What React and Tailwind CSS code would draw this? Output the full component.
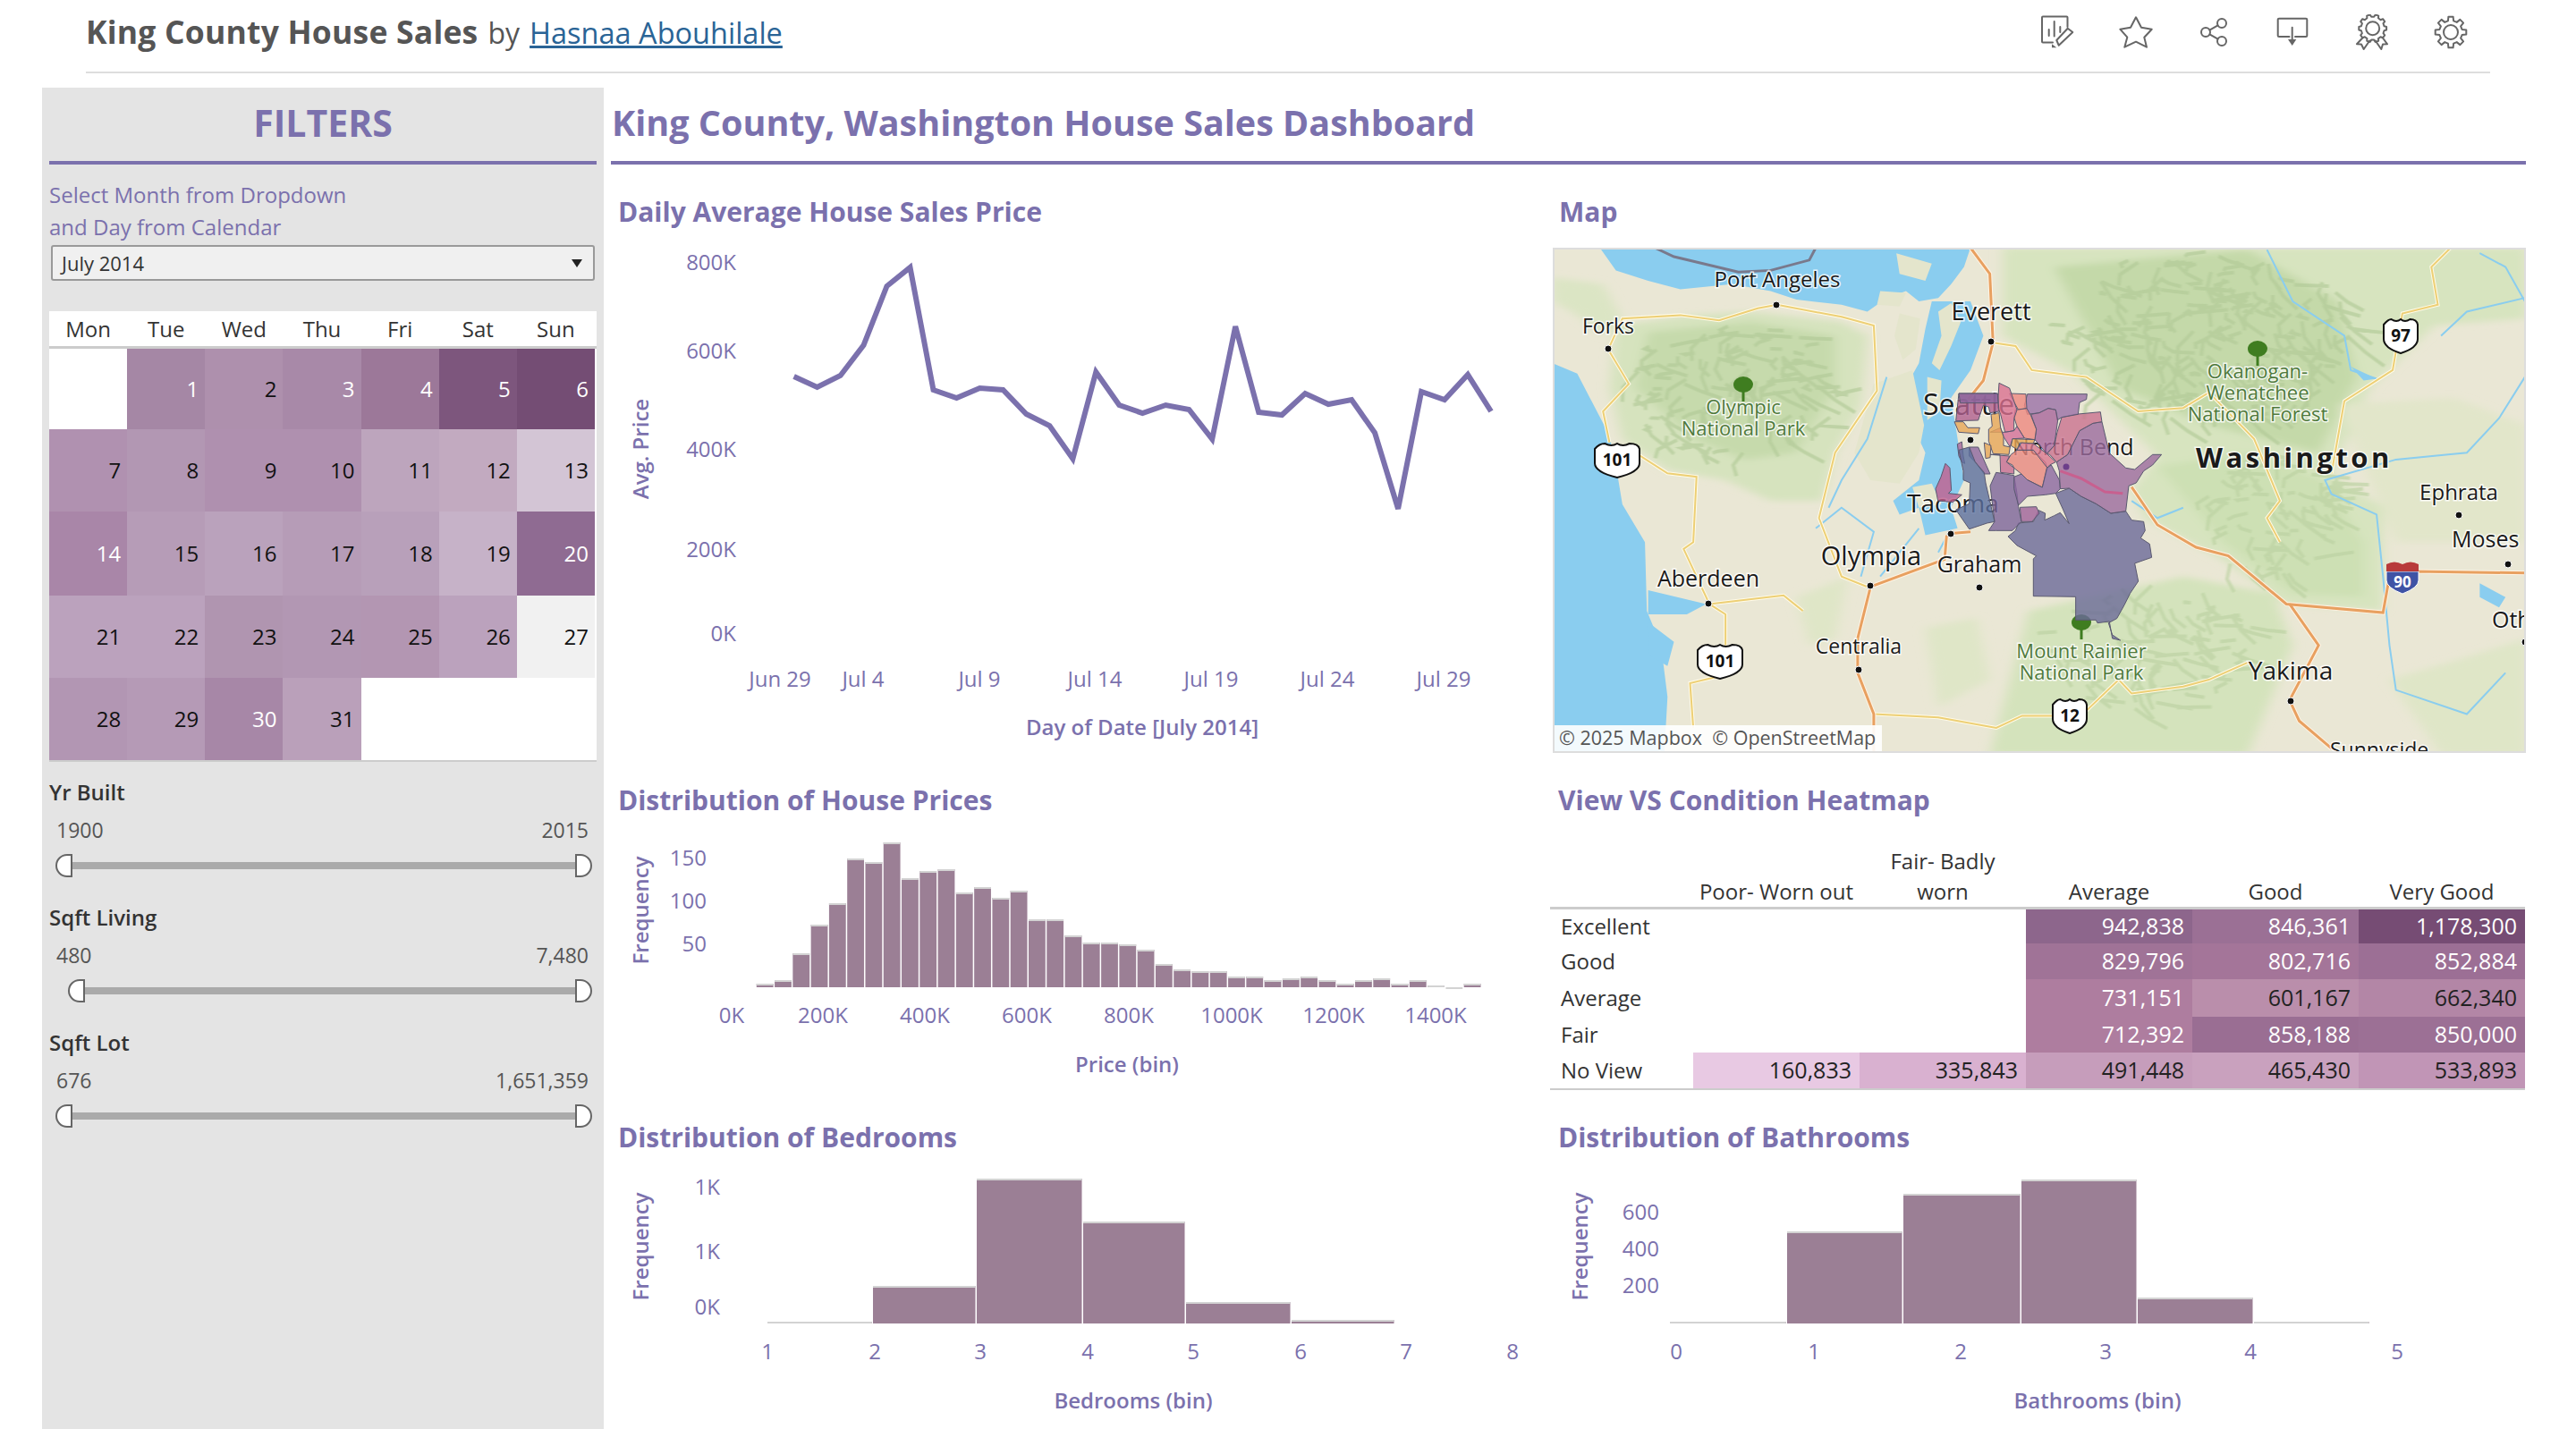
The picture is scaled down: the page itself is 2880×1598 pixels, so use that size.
import React from 'react'

const linePts = [421, 433, 420, 386, 320, 299, 436, 445, 434, 436, 463, 476, 513, 416, 453, 462, 453, 458, 491, 365, 461, 464, 440, 452, 447, 484, 569, 438, 447, 419, 460]
const priceBars = [4, 8, 38, 70, 94, 144, 140, 162, 122, 130, 132, 106, 112, 100, 108, 76, 76, 58, 50, 50, 48, 42, 26, 20, 18, 18, 12, 12, 8, 10, 12, 8, 4, 8, 10, 4, 8, 2, 0, 4]

const calendar = [
  [['', '#ffffff'], ['1', '#a587a5', 1], ['2', '#ae90ad'], ['3', '#a889a8', 1], ['4', '#9c7899', 1], ['5', '#7d567d', 1], ['6', '#744d74', 1]],
  [['7', '#b091b0'], ['8', '#b297b3'], ['9', '#af90af'], ['10', '#af90af'], ['11', '#bda5bd'], ['12', '#c2aac0'], ['13', '#d3c5d5']],
  [['14', '#a986a8', 1], ['15', '#b69cb7'], ['16', '#baa2bc'], ['17', '#b69cb7'], ['18', '#b8a0ba'], ['19', '#c6b2c8'], ['20', '#8f6b92', 1]],
  [['21', '#bba2bd'], ['22', '#bba2bd'], ['23', '#b095b0'], ['24', '#b297b3'], ['25', '#b396b2'], ['26', '#bba2bd'], ['27', '#f1f1f1']],
  [['28', '#b296b3'], ['29', '#b59ab6'], ['30', '#a787a7', 1], ['31', '#baa0ba'], ['', '#ffffff'], ['', '#ffffff'], ['', '#ffffff']],
]
const rowHeights = ['h-[90px]', 'h-[92px]', 'h-[94px]', 'h-[92px]', 'h-[92px]']

const heatRows = [
  ['Excellent', 'h-[38px]', [null, null, ['942,838', '#8d668c', 1], ['846,361', '#9b7095', 1], ['1,178,300', '#764c74', 1]]],
  ['Good', 'h-[40px]', [null, null, ['829,796', '#a07397', 1], ['802,716', '#a47599', 1], ['852,884', '#9c6f95', 1]]],
  ['Average', 'h-[42px]', [null, null, ['731,151', '#ae7d9f', 1], ['601,167', '#ba8eab'], ['662,340', '#b386a6']]],
  ['Fair', 'h-[40px]', [null, null, ['712,392', '#ae7d9f', 1], ['858,188', '#9a6e93', 1], ['850,000', '#9c7095', 1]]],
  ['No View', 'h-[40px]', [['160,833', '#e8c9e3'], ['335,843', '#d9b1d0'], ['491,448', '#c69dbb'], ['465,430', '#c9a1be'], ['533,893', '#c195b6']]],
]

const sliders = [
  { label: 'Yr Built', min: '1900', max: '2015', inset: 'ml-[7px]' },
  { label: 'Sqft Living', min: '480', max: '7,480', inset: 'ml-[21px]' },
  { label: 'Sqft Lot', min: '676', max: '1,651,359', inset: 'ml-[7px]' },
]

function gearPath(cx, cy, ro, ri, n) {
  let d = ''
  for (let i = 0; i < n; i++) {
    const a = (i * 2 * Math.PI) / n
    const w = Math.PI / n
    const pts = [[ri, a - w * 0.62], [ro, a - w * 0.38], [ro, a + w * 0.38], [ri, a + w * 0.62]]
    pts.forEach(([r, t], j) => {
      d += `${i === 0 && j === 0 ? 'M' : 'L'}${(cx + r * Math.cos(t)).toFixed(1)} ${(cy + r * Math.sin(t)).toFixed(1)} `
    })
  }
  return d + 'Z'
}

function HeaderIcons() {
  const stroke = { fill: 'none', stroke: '#666', strokeWidth: 2, strokeLinejoin: 'round', strokeLinecap: 'round' }
  const size = 'w-[40px] h-[40px]'
  return (
    <div className="flex gap-[48px] mr-[24px]">
      <svg viewBox="0 0 40 40" className={size}>
        <path d="M15 31.5H4a1 1 0 0 1-1-1V3.5a1 1 0 0 1 1-1h26.500a1 1 0 0 1 1 1V14" {...stroke} />
        <path d="M10.700 17v7M16.700 8v16.500M23.300 14v6" {...stroke} />
        <path d="M19.300 29 31.700 15.700l5.600 4.300-15.600 14.700z" {...stroke} />
        <path d="M14 33.300l5.300 4H14z" fill="#666" />
      </svg>
      <svg viewBox="0 0 40 40" className={size}>
        <path d="M20 3.300 26 14.700l11.700 2-8.400 9 2.700 11L20 30.700 7.300 36.700l3-11-8-9 11.700-2z" {...stroke} />
      </svg>
      <svg viewBox="0 0 40 40" className={size}>
        <circle cx="28" cy="10" r="5" {...stroke} />
        <circle cx="10" cy="20" r="5" {...stroke} />
        <circle cx="28" cy="30" r="5" {...stroke} />
        <path d="M14.400 17.600 23.600 12.400M14.400 22.400 23.600 27.600" {...stroke} />
      </svg>
      <svg viewBox="0 0 40 40" className={size}>
        <path d="M15.500 25H4a1.300 1.300 0 0 1-1.300-1.300V6a1.300 1.300 0 0 1 1.300-1.300h30A1.300 1.300 0 0 1 35.300 6v17.700a1.300 1.300 0 0 1-1.300 1.300H22" {...stroke} />
        <path d="M18.700 14.700V29" {...stroke} />
        <path d="M14 28h9.300l-4.600 7z" fill="#666" />
      </svg>
      <svg viewBox="0 0 40 40" className={size}>
        <path d={gearPath(20.700, 15.700, 15.500, 13, 10)} {...stroke} />
        <circle cx="20.700" cy="15.700" r="7.500" {...stroke} />
        <path d="M9.700 26 3 33.300l5 .2 2.700 5.500 6.600-9.500M31.700 26l5.300 7.300-5 .2-1.700 5.500-6.600-9.500" {...stroke} />
      </svg>
      <svg viewBox="0 0 40 40" className={size}>
        <path d={gearPath(20, 20, 17.500, 13, 8)} {...stroke} />
        <circle cx="20" cy="20" r="8" {...stroke} />
      </svg>
    </div>
  )
}

function SliderFilter({ label, min, max, inset }) {
  return (
    <div>
      <div className="h-[36px] leading-[36px] text-[24px] font-semibold text-[#333]">{label}</div>
      <div className="mt-[8px] h-[32px] leading-[32px] flex justify-between pl-[8px] pr-[9px] text-[23px] text-[#555]">
        <span>{min}</span>
        <span>{max}</span>
      </div>
      <div className={`mt-[11px] mr-[5px] h-[26px] flex items-center ${inset}`}>
        <div className="w-[19px] h-[26px] rounded-l-full border-2 border-[#666] bg-white" />
        <div className="flex-1 h-[8px] bg-[#aaaaaa]" />
        <div className="w-[19px] h-[26px] rounded-r-full border-2 border-[#666] bg-white" />
      </div>
    </div>
  )
}

function Sidebar() {
  return (
    <aside className="w-[628px] h-[1500px] ml-[47px] px-[8px] bg-[#e4e4e4]">
      <div className="h-[82px] pb-[3px] flex items-center justify-center text-[41px] font-bold text-[#7b71ad]">FILTERS</div>
      <div className="h-[4px] bg-[#7b71ad]" />
      <p className="mt-[16px] text-[24px] leading-[36px] font-medium text-[#7b71ad]">
        Select Month from Dropdown<br />and Day from Calendar
      </p>
      <div className="mt-[2px] mx-[2px] h-[40px] flex items-center justify-between px-[10px] border-2 border-[#999] rounded-[3px] bg-[#f0f0f0] text-[22px] text-[#333]">
        <span>July 2014</span>
        <span className="w-0 h-0 border-x-[6px] border-x-transparent border-t-[9px] border-t-[#222] mr-[2px]" />
      </div>
      <div className="mt-[34px] bg-white border-b-2 border-[#ccc]">
        <div className="grid grid-cols-7 pr-[2px] h-[42px] border-b-[3px] border-[#ccc] text-[24px] text-[#333] text-center leading-[40px]">
          {['Mon', 'Tue', 'Wed', 'Thu', 'Fri', 'Sat', 'Sun'].map((d) => <div key={d}>{d}</div>)}
        </div>
        {calendar.map((row, r) => (
          <div key={r} className={`grid grid-cols-7 pr-[2px] ${rowHeights[r]}`}>
            {row.map(([day, color, light], c) => (
              <div
                key={c}
                style={{ backgroundColor: color }}
                className={`flex items-center justify-end pr-[7px] text-[24px] ${light ? 'text-white' : 'text-[#111]'}`}
              >
                {day}
              </div>
            ))}
          </div>
        ))}
      </div>
      <div className="mt-[16px] flex flex-col gap-[27px]">
        {sliders.map((s) => <SliderFilter key={s.label} {...s} />)}
      </div>
    </aside>
  )
}

function AxisText({ x, y, children, anchor = 'middle', strong, rotate }) {
  return (
    <text
      x={x}
      y={rotate ? y : y - 1.500}
      textAnchor={anchor}
      dominantBaseline="central"
      transform={rotate ? `rotate(-90 ${x} ${y})` : undefined}
      className={`${strong ? 'font-semibold text-[24px]' : 'text-[24px]'} fill-[#7b71ad]`}
    >
      {children}
    </text>
  )
}

function Bar({ x, w, h, base }) {
  return (
    <g>
      <rect x={x} y={base - h} width={w - 1.500} height={h} fill="#9b7f95" />
      <rect x={x} y={base - h} width={w - 1.500} height={2} fill="#d3d3d3" />
    </g>
  )
}

function LineChart() {
  const d = linePts.map((y, i) => `${i ? 'L' : 'M'}${(887.6 + 25.98 * i).toFixed(1)} ${y}`).join(' ')
  return (
    <svg viewBox="683 255 1050 605" className="w-full flex-1">
      {[['800K', 294], ['600K', 393], ['400K', 503], ['200K', 615], ['0K', 709]].map(([t, y]) => <AxisText key={t} x={823} y={y} anchor="end">{t}</AxisText>)}
      {[['Jun 29', 872], ['Jul 4', 965], ['Jul 9', 1095], ['Jul 14', 1224], ['Jul 19', 1354], ['Jul 24', 1484], ['Jul 29', 1614]].map(([t, x]) => <AxisText key={t} x={x} y={760}>{t}</AxisText>)}
      <AxisText x={1277} y={814} strong>Day of Date [July 2014]</AxisText>
      <AxisText x={715} y={502} strong rotate>Avg. Price</AxisText>
      <path d={d} fill="none" stroke="#7b71ad" strokeWidth="6" strokeLinejoin="miter" />
    </svg>
  )
}

function PriceHistogram() {
  return (
    <svg viewBox="683 913 1050 317" className="w-full flex-1">
      {[['150', 960], ['100', 1008], ['50', 1056]].map(([t, y]) => <AxisText key={t} x={790} y={y} anchor="end">{t}</AxisText>)}
      {[['0K', 818], ['200K', 920], ['400K', 1034], ['600K', 1148], ['800K', 1262], ['1000K', 1377], ['1200K', 1491], ['1400K', 1605]].map(([t, x]) => <AxisText key={t} x={x} y={1136}>{t}</AxisText>)}
      <AxisText x={1260} y={1191} strong>Price (bin)</AxisText>
      <AxisText x={715} y={1018} strong rotate>Frequency</AxisText>
      {priceBars.map((h, i) => <Bar key={i} x={845.8 + 20.28 * i} w={20.28} h={h} base={1104} />)}
    </svg>
  )
}

function BedroomChart() {
  const bars = [[858, 976, 2], [976, 1092, 42], [1092, 1211, 162], [1211, 1326, 114], [1326, 1444, 24], [1444, 1560, 4]]
  return (
    <svg viewBox="683 1290 1050 308" className="w-full flex-1">
      {[['1K', 1328], ['1K', 1400], ['0K', 1462]].map(([t, y]) => <AxisText key={y} x={805} y={y} anchor="end">{t}</AxisText>)}
      {[858, 978, 1096, 1216, 1334, 1454, 1572, 1691].map((x, i) => <AxisText key={x} x={x} y={1512}>{i + 1}</AxisText>)}
      <AxisText x={1267} y={1567} strong>Bedrooms (bin)</AxisText>
      <AxisText x={715} y={1394} strong rotate>Frequency</AxisText>
      {bars.map(([a, b, h]) => <Bar key={a} x={a} w={b - a} h={h} base={1480} />)}
    </svg>
  )
}

function BathroomChart() {
  const bars = [[1867, 1998, 2], [1998, 2128, 103], [2128, 2260, 145], [2260, 2390, 161], [2390, 2520, 29], [2520, 2650, 2]]
  return (
    <svg viewBox="1733 1290 1091 308" className="w-full flex-1">
      {[['600', 1356], ['400', 1397], ['200', 1438]].map(([t, y]) => <AxisText key={t} x={1855} y={y} anchor="end">{t}</AxisText>)}
      {[1874, 2028, 2192, 2354, 2516, 2680].map((x, i) => <AxisText key={x} x={x} y={1512}>{i}</AxisText>)}
      <AxisText x={2345} y={1567} strong>Bathrooms (bin)</AxisText>
      <AxisText x={1765} y={1394} strong rotate>Frequency</AxisText>
      {bars.map(([a, b, h]) => <Bar key={a} x={a} w={b - a} h={h} base={1480} />)}
    </svg>
  )
}

function Heatmap() {
  return (
    <div className="mt-[32px] mr-[1px] text-[24px] text-[#333]">
      <div className="grid grid-cols-[160px_repeat(5,186px)] h-[72px] items-end text-center leading-[34px] border-b-[3px] border-[#ccc]">
        <div />
        <div>Poor- Worn out</div>
        <div>Fair- Badly<br />worn</div>
        <div>Average</div>
        <div>Good</div>
        <div>Very Good</div>
      </div>
      {heatRows.map(([label, h, cells]) => (
        <div key={label} className={`grid grid-cols-[160px_repeat(5,186px)] items-stretch ${h}`}>
          <div className="pl-[12px] flex items-center">{label}</div>
          {cells.map((c, i) =>
            c ? (
              <div
                key={i}
                style={{ backgroundColor: c[1] }}
                className={`flex items-center justify-end pr-[9px] text-[25px] ${c[2] ? 'text-white' : 'text-[#222]'}`}
              >
                {c[0]}
              </div>
            ) : (
              <div key={i} />
            ),
          )}
        </div>
      ))}
      <div className="h-[2px] bg-[#ccc]" />
    </div>
  )
}

// deterministic strokes for the relief on the basemap
function hachures(cx, cy, rx, ry, count, seed) {
  let s = seed
  const rnd = () => {
    s = (s * 16807) % 2147483647
    return s / 2147483647
  }
  let d = ''
  for (let i = 0; i < count; i++) {
    const a = rnd() * Math.PI * 2
    const r = Math.sqrt(rnd())
    const x = cx + Math.cos(a) * r * rx
    const y = cy + Math.sin(a) * r * ry
    const dx = (rnd() - 0.5) * 60
    const dy = (rnd() - 0.2) * 60
    d += `M${x.toFixed(0)} ${y.toFixed(0)}L${(x + dx).toFixed(0)} ${(y + dy).toFixed(0)}L${(x + dx * 1.6 + 14).toFixed(0)} ${(y + dy * 1.9).toFixed(0)}`
  }
  return d
}

const roadsMajor = [
  '670,44 700,120 705,320 690,430 660,500',
  '640,875 670,870',
  '633,880 630,950 515,1030 495,1180 495,1280 520,1400 520,1518',
  '920,740 960,850 1020,915 1070,940 1160,1080 1310,1105 1320,1000 1360,985 1532,990',
  '1165,1080 1210,1200 1165,1360 1180,1420 1230,1500',
]
const roadsMinor = [
  '108,340 140,440 100,520 110,610',
  '108,340 130,250 220,240 280,255 340,220 370,210 470,245 520,270 525,460 460,640 435,830 470,1000 510,1030',
  '150,640 200,700 245,710 240,900 225,920 245,1000 265,1080 290,1110 290,1200',
  '265,1080 380,1055 410,1100',
  '280,1290 235,1310 240,1440',
  '705,320 740,330 765,400 850,420 930,520 1000,510 1040,465 1110,600 1150,780 1130,830 1150,900',
  '1415,44 1385,100 1395,210 1340,235 1325,400 1250,490 1230,700',
  '520,1400 620,1410 710,1440 750,1405 800,1405 850,1390 900,1300 920,1340 1000,1320 1040,1300 1100,1250',
]
const rivers = [
  '1130,50 1170,200 1250,300 1260,400 1300,425',
  '1530,420 1490,540 1440,640 1330,660 1220,720 1230,760 1300,820 1310,1000 1320,1200 1330,1330 1440,1400 1500,1280',
  '920,780 960,830 1000,800',
  '1460,60 1500,100 1530,200',
  '1400,300 1440,230 1530,190',
  '540,420 510,600 470,720 450,800',
  '430,860 470,800 520,870 500,1000',
  '590,860 560,930 530,1000',
  '640,860 620,930',
]
const islands = [
  'M640 205 655 260 640 330 622 400 610 380 625 300 620 230Z',
  'M560 235 592 250 585 340 565 370 552 300Z',
  'M530 170 570 175 560 215 525 210Z',
  'M520 440 580 400 598 560 590 640 560 730 515 720 490 640Z',
  'M580 740 610 730 625 790 590 800Z',
  'M555 60 610 90 600 140 560 120Z',
  'M603 420 625 430 622 520 603 545Z',
]

const counties = [
  ['#6b6a98', '315,540 340,520 350,495 400,490 418,452 440,462 438,485 470,470 490,460 520,497 500,450 475,395 520,378 560,405 610,430 660,462 710,455 730,485 770,490 775,520 760,545 790,565 797,610 740,630 752,690 725,730 705,770 680,815 652,830 665,870 692,888 665,882 655,825 615,830 610,820 542,820 542,742 400,740 400,615 410,605 345,570'],
  ['#9b6b9e', '555,185 600,160 630,155 655,260 710,310 740,315 800,265 830,265 800,300 770,320 745,360 720,370 710,455 660,462 610,430 560,405 520,378 490,380 487,320 478,290 515,265'],
  ['#c9728f', '495,140 540,130 625,122 630,155 600,160 555,185 515,265 478,290 455,265 445,262 470,235 480,190'],
  ['#9a70a6', '380,62 580,62 578,80 555,90 550,130 495,140 480,150 475,115 450,110 420,125 380,130 370,100'],
  ['#a8669b', '392,130 420,125 450,110 475,115 482,150 470,235 445,262 405,215 410,180'],
  ['#ee8880', '320,60 375,62 378,110 350,115 330,80'],
  ['#ee8880', '340,115 378,110 392,135 410,180 405,215 370,210 345,170 335,140'],
  ['#d97090', '285,25 320,42 345,115 335,145 335,185 305,190 290,130 280,105'],
  ['#d4709a', '255,190 305,190 335,185 345,170 370,210 330,212 322,240 300,205 290,175'],
  ['#b0608f', '150,60 280,60 285,120 255,125 250,105 232,100 215,150 140,152'],
  ['#8a669e', '150,60 280,60 282,92 155,92'],
  ['#e7a858', '258,130 285,125 290,175 300,205 300,235 322,240 318,265 265,262 250,220 250,180 262,170'],
  ['#e7a858', '135,155 165,155 180,175 220,175 215,195 150,190'],
  ['#e7a858', '330,212 405,215 400,228 380,230 355,225 345,248 325,235'],
  ['#e7a858', '235,225 258,235 255,275 240,278'],
  ['#e9887f', '325,265 345,250 400,250 440,290 447,310 430,375 380,350 360,330 335,310 330,300 310,290'],
  ['#d9788f', '345,250 360,225 400,228 445,262 475,290 455,300 447,310 400,250'],
  ['#c25f8d', '105,295 120,310 125,385 115,395 160,400 130,425 80,420 72,380 90,340'],
  ['#a8669b', '145,230 160,222 165,270 170,295 160,290 150,270'],
  ['#8f689f', '185,240 215,240 255,330 235,330 205,290 185,270'],
  ['#5b6f9e', '150,250 185,240 205,290 235,325 240,360 270,490 245,495 185,515 140,450 185,430 188,360 165,350 165,320'],
  ['#7d659a', '275,325 335,335 345,395 350,440 360,490 330,520 275,520 250,520 270,490 255,370'],
  ['#8b68a0', '445,310 460,300 487,350 490,380 475,395 440,400 380,405 375,410 350,435 335,380 335,340 360,330 380,350 430,375'],
  ['#a0639a', '355,442 410,440 420,462 395,490 360,490'],
  ['#c76d92', '255,265 320,270 310,290 335,310 335,330 290,325 288,265'],
]

const mapLabels = [
  ['Port Angeles', 251, 34, 24],
  ['Everett', 490, 70, 27],
  ['Forks', 62, 87, 23],
  ['Yakima', 825, 472, 28],
  ['Ephrata', 1013, 272, 24],
  ['Centralia', 342, 445, 23],
  ['Aberdeen', 174, 369, 25],
  ['Olympia', 356, 343, 29],
  ['Graham', 477, 353, 25],
]
const parkLabels = [
  ['Olympic', 213, 177], ['National Park', 213, 201],
  ['Okanogan-', 788, 137], ['Wenatchee', 788, 161], ['National Forest', 788, 185],
  ['Mount Rainier', 591, 450], ['National Park', 591, 474],
]
const dots = [[250, 64], [62, 113], [490, 105], [467, 215], [445, 320], [355, 378], [477, 380], [174, 398], [342, 472], [825, 507], [1013, 299], [1068, 354], [1087, 441]]
const trees = [[213, 156], [788, 116], [591, 422]]
const shields = [[72, 237, 50, '101'], [948, 98, 38, '97'], [187, 462, 50, '101'], [578, 523, 38, '12']]

function MapLabel({ x, y, size, children, anchor = 'middle', color = '#1a1a1a', weight = 400, spacing }) {
  return (
    <text
      x={x}
      y={y}
      textAnchor={anchor}
      dominantBaseline="central"
      fontSize={size}
      fontWeight={weight}
      fill={color}
      letterSpacing={spacing}
      stroke="#ffffff"
      strokeOpacity="0.8"
      strokeWidth="3"
      paintOrder="stroke"
    >
      {children}
    </text>
  )
}

function Shield({ x, y, w, label }) {
  const hw = w / 2
  return (
    <g>
      <path
        d={`M${x - hw} ${y - 12}q5 -6 ${hw * 0.45} -6q${hw * 0.3} 4 ${hw * 0.55} 0q${hw * 0.25} 4 ${hw * 0.55} 0q${hw * 0.4} 0 ${hw * 0.45} 6v16q0 10 -${hw} 16q-${hw} -6 -${hw} -16z`}
        fill="#fff"
        stroke="#111"
        strokeWidth="2"
      />
      <text x={x} y={y} textAnchor="middle" dominantBaseline="central" fontSize="19" fontWeight="700" fill="#111">{label}</text>
    </g>
  )
}

function MapPanel() {
  const ns = { vectorEffect: 'non-scaling-stroke' }
  return (
    <div className="relative ml-[3px] mt-[22px] h-[565px] overflow-hidden">
      <svg viewBox="0 0 1088 565" className="w-full h-full block">
        <defs>
          <filter id="soft" x="-5%" y="-5%" width="110%" height="110%"><feGaussianBlur stdDeviation="9" /></filter>
          <filter id="relief" x="-5%" y="-5%" width="110%" height="110%"><feGaussianBlur stdDeviation="1.500" /></filter>
        </defs>
        <rect width="1088" height="565" fill="#eae7d5" />
        {/* basemap, points taken in a 1.39 x 2.6 scaled space */}
        <g transform="scale(.7207 .3846) translate(-22 -44)">
          <g filter="url(#soft)">
            <path d="M120 270 240 240 330 230 470 260 510 300 500 500 460 640 440 780 360 780 290 720 200 690 130 600 110 450Z" fill="#d6e3be" />
            <path d="M170 290 330 260 460 300 460 450 400 640 320 660 240 600 150 450Z" fill="#c6daac" />
            <path d="M720 44H1532V250L1390 270 1290 450 1230 700 1310 800 1310 1100 1160 1080 1060 950 940 830 920 750 960 650 830 410 720 300Z" fill="#d7e4bf" />
            <path d="M800 100 1100 50 1240 200 1270 420 1210 640 1040 560 900 450Z" fill="#c4d9a9" />
            <path d="M960 680 1100 640 1220 720 1280 900 1280 1060 1170 1050 1060 900Z" fill="#cde0b4" />
            <path d="M760 1100 1000 1000 1140 1050 1170 1200 1100 1518H700Z" fill="#d4e3bc" />
            <path d="M1320 1300 1430 1240 1532 1180V1518H1400Z" fill="#dfe6c7" />
            <path d="M20 130 100 150 130 250 100 300 60 240 22 200Z" fill="#dbe5c4" />
            <path d="M400 1060 480 1000 460 1180 420 1200ZM600 1150 680 1120 700 1300 620 1380Z" fill="#dfe6c7" />
            <path d="M1240 500 1420 480 1532 560 1532 900 1330 900Z" fill="#e2e6ca" />
          </g>
          <g filter="url(#relief)" fill="none" strokeWidth="4" opacity=".65">
            <path d={hachures(310, 460, 170, 190, 110, 11)} stroke="#b2ca98" {...ns} />
            <path d={hachures(1040, 300, 230, 250, 210, 37)} stroke="#b2ca98" {...ns} />
            <path d={hachures(1150, 820, 120, 190, 70, 71)} stroke="#bcd2a2" {...ns} />
            <path d={hachures(950, 1210, 170, 190, 80, 97)} stroke="#bcd2a2" {...ns} />
          </g>

          <path d="M22 380 60 410 110 590 122 700 130 790 165 900 168 1100 190 1200 200 1350 195 1518H22Z" fill="#8acdef" />
          <path d="M95 44H670L660 100 640 150 620 190 590 200 570 170 540 190 510 230 470 210 400 195 360 170 300 150 220 165 170 140 120 110Z" fill="#8acdef" />
          <path d="M610 200 670 200 690 300 670 400 640 480 650 600 660 720 640 800 650 860 600 880 590 800 560 820 550 780 590 720 600 640 580 560 560 480 590 380 600 280Z" fill="#8acdef" />
          <path d="M170 1040 260 1080 230 1110 170 1110ZM168 1130 210 1190 200 1260 172 1230Z" fill="#8acdef" />
          <path d={islands.join(' ')} fill="#e4e5cc" />
          {rivers.map((p) => <polyline key={p} points={p} fill="none" stroke="#8acdef" strokeWidth="2" {...ns} />)}
          <path d="M1260 390 1300 425 1280 430ZM1460 1020 1500 1060 1490 1090 1460 1060Z" fill="#8acdef" />
          <polyline points="180,44 210,70 310,115 360,110 420,80 430,44" fill="none" stroke="#79798c" strokeWidth="3" {...ns} />
          {roadsMinor.map((p) => <polyline key={p} points={p} fill="none" stroke="#fffbe8" strokeWidth="4" {...ns} />)}
          {roadsMinor.map((p) => <polyline key={p} points={p} fill="none" stroke="#edcf75" strokeWidth="2" {...ns} />)}
          {roadsMajor.map((p) => <polyline key={p} points={p} fill="none" stroke="#fff4e4" strokeWidth="5" {...ns} />)}
          {roadsMajor.map((p) => <polyline key={p} points={p} fill="none" stroke="#e8a060" strokeWidth="3" {...ns} />)}
        </g>

        {mapLabels.map(([t, x, y, s]) => <MapLabel key={t} x={x} y={y} size={s}>{t}</MapLabel>)}
        {parkLabels.map(([t, x, y], i) => <MapLabel key={i} x={x} y={y} size={22} color="#4f7a3c">{t}</MapLabel>)}
        <MapLabel x={414} y={174} size={32} anchor="start">Seattle</MapLabel>
        <MapLabel x={396} y={285} size={28} anchor="start">Tacoma</MapLabel>
        <MapLabel x={514} y={222} size={25} anchor="start">North Bend</MapLabel>
        <MapLabel x={1005} y={325} size={25} anchor="start">Moses Lake</MapLabel>
        <MapLabel x={1050} y={415} size={25} anchor="start">Othello</MapLabel>
        <MapLabel x={869} y={561} size={23} anchor="start">Sunnyside</MapLabel>
        <MapLabel x={829} y={234} size={31} weight={700} spacing={3.500}>Washington</MapLabel>
        {dots.map(([x, y]) => <circle key={x} cx={x} cy={y} r="4" fill="#111" stroke="#fff" strokeWidth="1" />)}
        {trees.map(([x, y]) => (
          <g key={x} fill="#3f7d20">
            <rect x={x - 1.500} y={y} width="3" height="16" />
            <ellipse cx={x} cy={y - 3} rx="11" ry="9" />
          </g>
        ))}
        {shields.map(([x, y, w, t]) => <Shield key={x} x={x} y={y} w={w} label={t} />)}
        <g>
          <path d="M932 362h36v10q0 8 -18 15q-18 -7 -18 -15z" fill="#3f53a5" stroke="#fff" strokeWidth="1" />
          <path d="M932 354q9 -5 18 0q9 -5 18 0v8h-36z" fill="#b83a3a" />
          <text x="950" y="373" textAnchor="middle" dominantBaseline="central" fontSize="17" fontWeight="700" fill="#fff">90</text>
        </g>

        <g transform="translate(404 143) scale(.3333)" stroke="#5a5970" strokeWidth="1" fillOpacity=".8">
          {counties.map(([color, pts], i) => <polygon key={i} points={pts} fill={color} {...ns} />)}
          <polyline points="490,320 560,345 640,390 700,395" fill="none" stroke="#c8608f" strokeWidth="3" {...ns} />
        </g>
        <circle cx="574" cy="245" r="3.500" fill="#6d3f8a" />
        <circle cx="467" cy="215" r="4" fill="#111" stroke="#fff" strokeWidth="1" />
      </svg>
      <div className="absolute inset-0 border-2 border-[#ddd] pointer-events-none" />
      <div className="absolute left-[2px] bottom-[2px] h-[29px] w-[366px] pl-[5px] bg-white/90 text-[21.500px] leading-[27px] text-[#555] whitespace-pre">© 2025 Mapbox  © OpenStreetMap</div>
    </div>
  )
}

function Panel({ title, pad, left, children }) {
  return (
    <section className="flex flex-col min-h-0">
      <h2 className={`${pad} ${left} h-[36px] box-content text-[30px] leading-[36px] font-bold text-[#7b71ad] whitespace-nowrap`}>{title}</h2>
      {children}
    </section>
  )
}

export default function App() {
  return (
    <div className="w-[2880px] h-[1598px] bg-white overflow-hidden font-['Open_Sans',sans-serif]">
      <header className="mx-[96px] h-[82px] pb-[8px] flex items-center justify-between border-b-2 border-[#ddd]">
        <div className="flex items-baseline gap-[11px] whitespace-nowrap">
          <span className="text-[35.500px] font-bold text-[#555] tracking-[0.2px]">King County House Sales</span>
          <span className="text-[32px] text-[#555]">by</span>
          <a className="text-[32.500px] font-medium text-[#2a6496] underline">Hasnaa Abouhilale</a>
        </div>
        <HeaderIcons />
      </header>
      <div className="flex mt-[16px]">
        <Sidebar />
        <main className="ml-[8px] w-[2141px]">
          <div className="h-[82px] pb-[3px] flex items-center pl-[1px] text-[39.500px] font-bold text-[#7b71ad]">King County, Washington House Sales Dashboard</div>
          <div className="h-[4px] bg-[#7b71ad]" />
          <div className="grid grid-cols-[1050px_1091px] grid-rows-[676px_370px_368px]">
            <Panel title="Daily Average House Sales Price" pad="pt-[35px]" left="pl-[8px]"><LineChart /></Panel>
            <Panel title="Map" pad="pt-[35px]" left="pl-[10px]"><MapPanel /></Panel>
            <Panel title="Distribution of House Prices" pad="pt-[17px]" left="pl-[8px]"><PriceHistogram /></Panel>
            <Panel title="View VS Condition Heatmap" pad="pt-[17px]" left="pl-[9px]"><Heatmap /></Panel>
            <Panel title="Distribution of Bedrooms" pad="pt-[24px]" left="pl-[8px]"><BedroomChart /></Panel>
            <Panel title="Distribution of Bathrooms" pad="pt-[24px]" left="pl-[9px]"><BathroomChart /></Panel>
          </div>
        </main>
      </div>
    </div>
  )
}
